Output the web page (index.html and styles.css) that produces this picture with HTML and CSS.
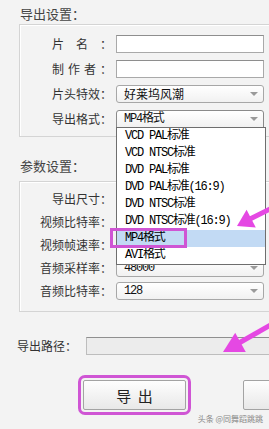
FILE: index.html
```html
<!DOCTYPE html>
<html lang="zh-CN">
<head>
    <meta charset="UTF-8">
    <meta name="viewport" content="width=device-width, initial-scale=1.0">
    <title>导出设置</title>
    <link rel="stylesheet" href="styles.css">
</head>
<body>
    <div class="page">
        <h3 class="group-title title-export">导出设置：</h3>
        <div class="group group-export">
            <div class="row">
                <span class="label"><span class="just">片名：</span></span>
                <div class="text-box"></div>
            </div>
            <div class="row">
                <span class="label"><span class="just">制作者：</span></span>
                <div class="text-box"></div>
            </div>
            <div class="row">
                <span class="label"><span class="just">片头特效：</span></span>
                <div class="select">好莱坞风潮</div>
            </div>
            <div class="row">
                <span class="label"><span class="just">导出格式：</span></span>
                <div class="select open mono">MP4格式
                    <!-- 펼쳐진 목록 -->
                    <ul class="drop-list">
                        <li>VCD PAL标准</li>
                        <li>VCD NTSC标准</li>
                        <li>DVD PAL标准</li>
                        <li>DVD PAL标准(16:9)</li>
                        <li>DVD NTSC标准</li>
                        <li>DVD NTSC标准(16:9)</li>
                        <li class="active">MP4格式</li>
                        <li>AVI格式</li>
                    </ul>
                </div>
            </div>
        </div>

        <h3 class="group-title title-param">参数设置：</h3>
        <div class="group group-param">
            <div class="row">
                <span class="label">导出尺寸：</span>
                <div class="select"></div>
            </div>
            <div class="row">
                <span class="label">视频比特率：</span>
                <div class="select"></div>
            </div>
            <div class="row">
                <span class="label">视频帧速率：</span>
                <div class="select"></div>
            </div>
            <div class="row">
                <span class="label">音频采样率：</span>
                <div class="select mono">48000</div>
            </div>
            <div class="row">
                <span class="label">音频比特率：</span>
                <div class="select mono">128</div>
            </div>
        </div>

        <div class="path-row">
            <span class="path-label">导出路径：</span>
            <div class="path-box"></div>
        </div>

        <div class="btn-row">
            <button class="btn btn-export">导 出</button>
            <button class="btn btn-other"></button>
        </div>

        <!-- 표시용 화살표, 박스 -->
        <svg class="marks" width="269" height="429" viewBox="0 0 269 429">
            <rect x="111.5" y="229.5" width="74" height="17" fill="none" stroke="#cf55d4" stroke-width="3"/>
            <line x1="274" y1="207" x2="250" y2="219" stroke="#e548e3" stroke-width="5"/>
            <polygon points="237,226 246.6,209.8 255.8,227.6" fill="#e548e3"/>
            <line x1="274" y1="323" x2="239" y2="343" stroke="#e548e3" stroke-width="5"/>
            <polygon points="223,352 235.2,332.8 245.8,352" fill="#e548e3"/>
        </svg>

        <div class="watermark">头条 @同舞蹈跳跳</div>
    </div>
</body>
</html>
```

FILE: styles.css
```css
body{
    margin: 0;
    background: #f3f3f3;
}

.page{
    width: 269px;
    height: 429px;
    overflow: hidden;
    position: relative;
    font-family: "Noto Sans CJK SC", "Liberation Sans", sans-serif;
    color: #333;
}

.group-title{
    font-size: 13px;
    font-weight: normal;
    line-height: 16px;
    color: #444;
    margin: 0 0 0 20px;
}

.title-export{
    margin-top: 6px;
    margin-bottom: 2px;
}

.title-param{
    margin-top: 21px;
    margin-bottom: 7px;
}

.group{
    width: 280px;
    margin-left: 19px;
    border: 1px solid #d4d4d4;
    box-shadow: inset 1px 1px 0 #fff;
    display: flex;
    flex-direction: column;
}

.group-export{
    padding: 10px 0 8px;
    gap: 7px;
}

.group-param{
    padding: 8px 0 11px;
    gap: 5px;
}

.row{
    display: flex;
    align-items: center;
    gap: 4px;
    height: 18px;
}

.label{
    width: 92px;
    flex: none;
    text-align: right;
    font-size: 12px;
    line-height: 18px;
    color: #333;
}

/* 글자 사이를 양쪽으로 벌림 */
.just{
    display: inline-block;
    width: 60px;
    text-align: justify;
    text-align-last: justify;
}

.text-box{
    width: 148px;
    height: 18px;
    box-sizing: border-box;
    background: #fff;
    border: 1px solid #a9a9a9;
    border-top-color: #8e8e8e;
}

.select{
    position: relative;
    width: 148px;
    height: 18px;
    box-sizing: border-box;
    border: 1px solid #a7a7a7;
    border-radius: 3px;
    background: linear-gradient(#ffffff, #f1f1f1);
    padding-left: 7px;
    font-size: 12px;
    line-height: 16px;
    color: #111;
}

.select::after{
    content: "";
    position: absolute;
    right: 5px;
    top: 6px;
    border-left: 4px solid transparent;
    border-right: 4px solid transparent;
    border-top: 4px solid #9a9a9a;
}

.mono{
    font-family: "Liberation Mono", "Noto Sans CJK SC", monospace;
    letter-spacing: -1.2px;
}

.open{
    border-color: #8a8a8a;
    border-radius: 3px 3px 0 0;
}

.drop-list{
    position: absolute;
    z-index: 5;
    top: 16px;
    left: -1px;
    width: 150px;
    box-sizing: border-box;
    margin: 0;
    padding: 0;
    list-style: none;
    background: #fff;
    border: 1px solid #6e6e6e;
}

.drop-list li{
    height: 17px;
    line-height: 17px;
    padding-left: 8px;
    color: #000;
}

.drop-list li.active{
    background: #c2daf4;
}

.path-row{
    display: flex;
    align-items: center;
    gap: 9px;
    width: 300px;
    margin-top: 25px;
    padding-left: 17px;
}

.path-label{
    font-size: 12px;
    line-height: 18px;
    color: #333;
    flex: none;
}

.path-box{
    width: 200px;
    height: 18px;
    box-sizing: border-box;
    background: #ececec;
    border: 1px solid #bdbdbd;
    border-top-color: #8f8f8f;
}

.btn-row{
    display: flex;
    gap: 57px;
    width: 320px;
    margin-top: 25px;
    padding-left: 83px;
}

.btn{
    height: 30px;
    box-sizing: border-box;
    border: 1px solid #a3a3a3;
    border-radius: 2px;
    background: linear-gradient(#fefefe, #e8e8e8);
    font-family: "Noto Sans CJK SC", sans-serif;
    color: #222;
    padding: 0;
}

.btn-export{
    width: 103px;
    font-size: 15px;
    word-spacing: 3px;
    outline: 3px solid #cf55d4;
    outline-offset: 2px;
}

.btn-other{
    width: 100px;
}

.marks{
    position: absolute;
    top: 0;
    left: 0;
    z-index: 10;
    pointer-events: none;
}

.watermark{
    position: absolute;
    right: 6px;
    bottom: 5px;
    font-size: 8px;
    color: #888;
    z-index: 11;
}
```
